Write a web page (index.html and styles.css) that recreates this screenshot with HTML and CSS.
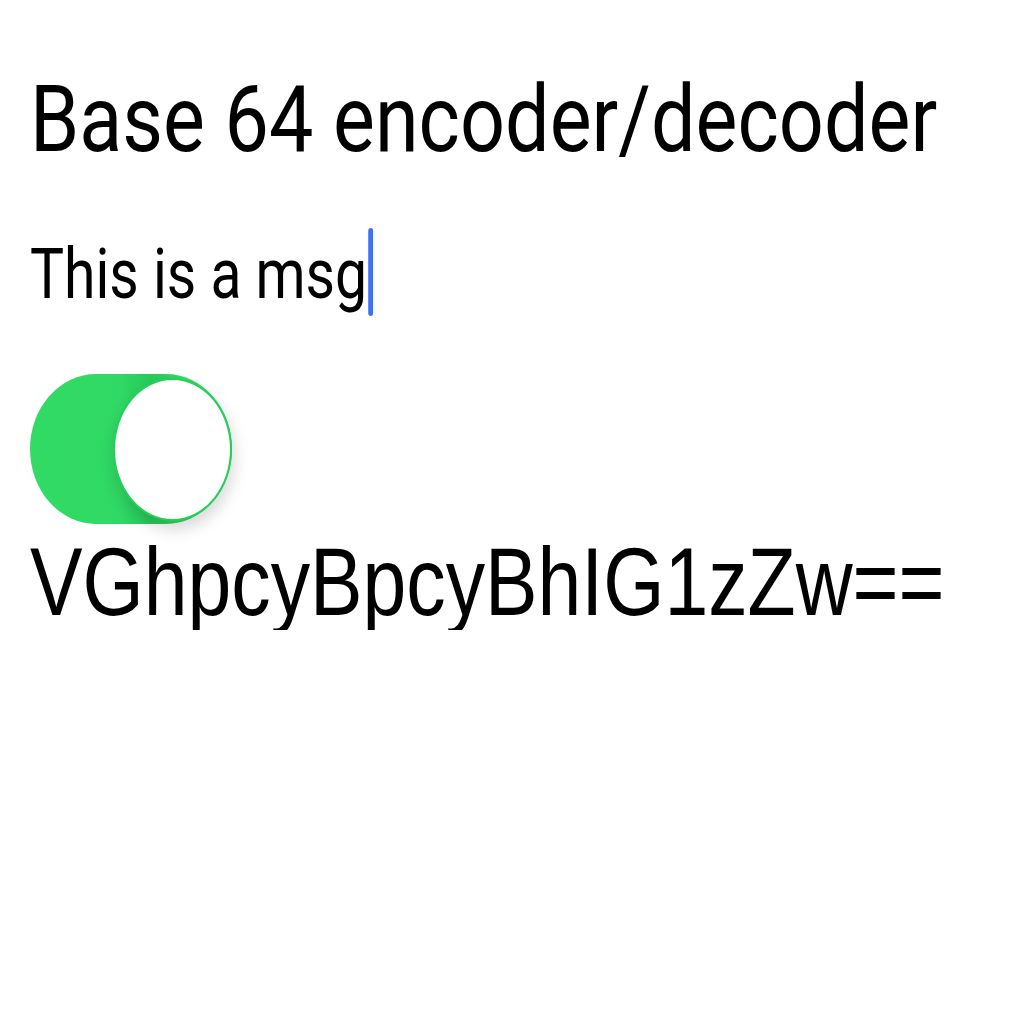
FILE: index.html
```html
<!DOCTYPE html>
<html>
<head>
<meta charset="utf-8">
<link rel="stylesheet" href="styles.css">
</head>
<body>
<main class="page">
  <h1 class="title">Base 64 encoder/decoder</h1>
  <div class="field"><span class="field-text">This is a msg</span><span class="caret"></span></div>
  <div class="toggle"><span class="knob"></span></div>
  <p class="result">VGhpcyBpcyBhIG1zZw==</p>
</main>
</body>
</html>
```
FILE: styles.css
```css
html, body {
  margin: 0;
  padding: 0;
  background: #ffffff;
  overflow: hidden;
}
.page {
  display: flex;
  flex-direction: column;
  align-items: flex-start;
  padding: 0 0 0 30px;
}
.title {
  margin: 73px 0 0 0;
  font-family: Roboto, sans-serif;
  font-weight: 400;
  font-size: 93px;
  line-height: 1;
  color: #000;
  white-space: nowrap;
  transform: scaleX(0.85);
  transform-origin: 0 50%;
}
.field {
  display: flex;
  align-items: center;
  margin-top: 38px;
  height: 130px;
  transform: scaleX(0.815);
  transform-origin: 0 50%;
}
.field-text {
  font-family: Roboto, sans-serif;
  font-size: 70px;
  line-height: 1;
  color: #000;
  padding-top: 10px;
}
.caret {
  width: 6px;
  height: 88px;
  margin-left: 1px;
  margin-top: 6px;
  background: #3d72f5;
  border-radius: 3px;
}
.toggle {
  margin-top: 40px;
  width: 202px;
  height: 150px;
  border-radius: 66px / 75px;
  background: linear-gradient(90deg, #32db64 0%, #30d865 45%, #27c95a 60%, #32db64 75%);
  display: flex;
  justify-content: flex-end;
  align-items: center;
}
.knob {
  width: 115px;
  height: 139px;
  border-radius: 50%;
  background: #fff;
  border: 2px solid #25cf5a;
  box-shadow: 2px 8px 16px rgba(0,0,0,0.16);
}
.result {
  margin: 10px 0 0 0;
  font-family: "Liberation Sans", Arial, sans-serif;
  font-size: 96px;
  line-height: 1;
  color: #000;
  white-space: nowrap;
  transform: scaleX(0.82);
  transform-origin: 0 50%;
}
```
